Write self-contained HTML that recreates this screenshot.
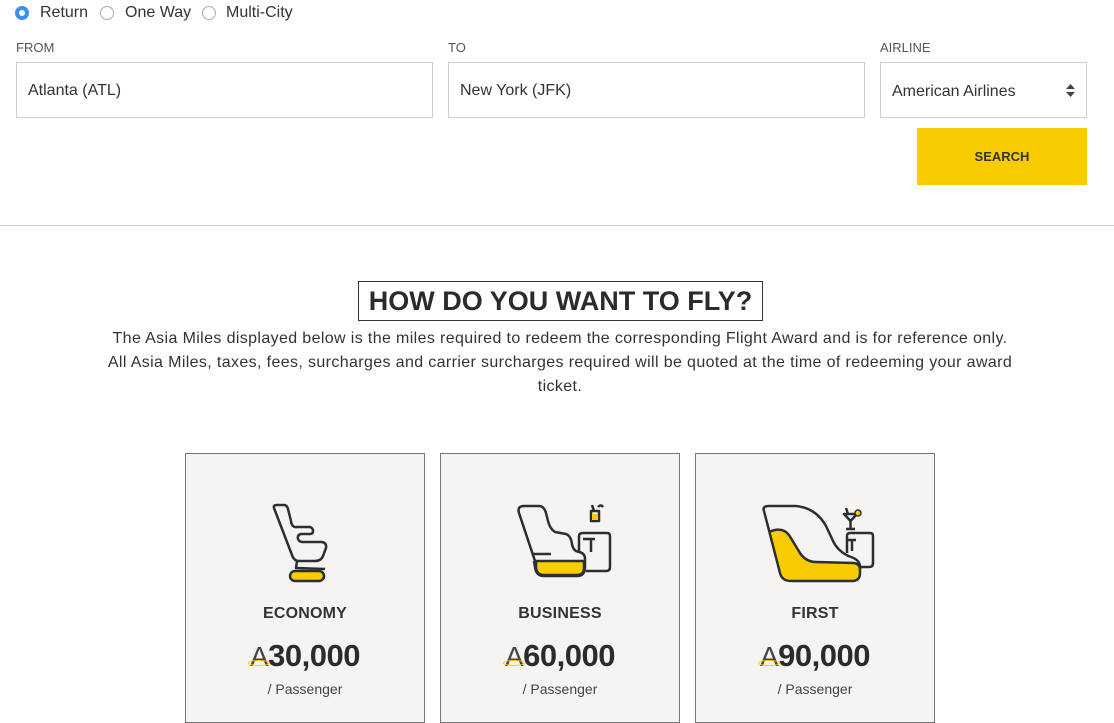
<!DOCTYPE html>
<html><head><meta charset="utf-8"><style>
*{margin:0;padding:0;box-sizing:border-box}
body{width:1114px;height:706px;overflow:hidden;background:#fff;font-family:"Liberation Sans",sans-serif;color:#333;position:relative}
.a{position:absolute}
.radio{width:14px;height:14px;border:1px solid #aaa;border-radius:50%;top:6px}
.lbl{font-size:13px;color:#555;top:40px}
.inp{border:1px solid #ccc;height:56px;top:62px;font-size:16px;padding-left:11px;line-height:56px;color:#333}
.card{top:453px;width:240px;height:270px;background:#f5f4f2;border:1px solid #777}
.t{position:absolute;left:0;right:0;text-align:center}
.ttl{top:151px;font-size:16px;font-weight:bold;color:#333;letter-spacing:.2px}
.pr{top:184px;font-size:31px;font-weight:bold;color:#2b2b2b;letter-spacing:-.5px}
.pr span{font-weight:normal;color:#444;font-size:28px;position:relative}
.pr span:after{content:"";position:absolute;left:-2px;top:19px;width:20px;height:4px;border:1.5px solid #f8cc00;border-radius:50%}
.ps{top:227px;font-size:14px;color:#444}
</style></head><body>
<div class="a radio" style="left:15px;border:4px solid #3b8ff5;background:#fff"></div>
<div class="a" style="left:40px;top:4px;font-size:16px">Return</div>
<div class="a radio" style="left:100px"></div>
<div class="a" style="left:125px;top:4px;font-size:16px">One Way</div>
<div class="a radio" style="left:202px"></div>
<div class="a" style="left:226px;top:4px;font-size:16px">Multi-City</div>
<div class="a lbl" style="left:16px">FROM</div>
<div class="a lbl" style="left:448px">TO</div>
<div class="a lbl" style="left:880px">AIRLINE</div>
<div class="a inp" style="left:16px;width:417px">Atlanta (ATL)</div>
<div class="a inp" style="left:448px;width:417px">New York (JFK)</div>
<div class="a inp" style="left:880px;width:207px;line-height:58px">American Airlines</div>
<svg class="a" style="left:1064px;top:83px" width="14" height="16"><path d="M2 6 L6.5 1 L11 6Z M2 9 L6.5 14 L11 9Z" fill="#444"/></svg>
<div class="a" style="left:917px;top:128px;width:170px;height:57px;background:#f8cc00;font-size:13px;font-weight:bold;text-align:center;line-height:57px;color:#333">SEARCH</div>
<div class="a" style="left:0;top:225px;width:1114px;height:1px;background:#ccc"></div>
<div class="a" style="left:358px;top:281px;width:405px;height:40px;border:1px solid #333;font-size:27px;font-weight:bold;text-align:center;line-height:38px;color:#2b2b2b">HOW DO YOU WANT TO FLY?</div>
<div class="a" style="left:60px;top:327px;width:1000px;text-align:center;font-size:16px;line-height:24px;color:#333;letter-spacing:.37px">The Asia Miles displayed below is the miles required to redeem the corresponding Flight Award and is for reference only.<br>All Asia Miles, taxes, fees, surcharges and carrier surcharges required will be quoted at the time of redeeming your award<br>ticket.</div>

<div class="a card" style="left:185px">
<svg class="a" style="left:80px;top:47px" width="80" height="90" viewBox="0 0 80 90"><g fill="none" stroke="#2b2f33" stroke-width="2.5" stroke-linejoin="round">
<path d="M8 7 Q7 4 11 4 L18 4 Q21 4 22 8 L25 20 Q26 27 31 26 L44 26 Q47 27 47 30 Q47 33 44 33 L35 33 Q31 34 32 38 Q33 41 37 41 L56 41 Q61 42 60 47 L57 55 Q55 60 49 60 L33 60 Q28 60 26 54 Z"/>
<path d="M31 60 L30 67 L59 68"/></g>
<rect x="24" y="70" width="34" height="10" rx="5" fill="#f8cc00" stroke="#2b2f33" stroke-width="2.5"/></svg>
<div class="t ttl">ECONOMY</div>
<div class="t pr"><span>A</span>30,000</div>
<div class="t ps">/ Passenger</div>
</div>

<div class="a card" style="left:440px">
<svg class="a" style="left:72px;top:47px" width="110" height="90" viewBox="0 0 110 90"><g fill="none" stroke="#2b2f33" stroke-width="2.5" stroke-linejoin="round">
<path d="M24 66 L6 12 Q4 5 11 5 L26 5 Q31 5 33 12 L35 20 Q37 28 42 31 L53 33 Q58 35 59 43 Q60 50 66 51 Q72 52 72 58 L72 66 Q72 75 64 75 L31 75 Q23 75 22 66 L21 60"/>
<path d="M20 53 L38 53"/>
<path d="M66 52 L66 35 Q66 32 70 32 L94 32 Q97 32 97 35 L97 66 Q97 70 93 70 L73 70"/>
<path d="M70 38 L82 38 M78 38 L78 51"/>
<path d="M78 10 L78 20 L86 20 L86 10 Z"/><path d="M81 10 L79 4 M85 6 Q88 3 90 6"/></g>
<path d="M23 60 L71 60 L71 67 Q71 74 64 74 L31 74 Q24 74 23 67Z" fill="#f8cc00" stroke="#2b2f33" stroke-width="2.5"/>
<rect x="79" y="13" width="6" height="6" fill="#f8cc00"/></svg>
<div class="t ttl">BUSINESS</div>
<div class="t pr"><span>A</span>60,000</div>
<div class="t ps">/ Passenger</div>
</div>

<div class="a card" style="left:695px">
<svg class="a" style="left:60px;top:47px" width="120" height="90" viewBox="0 0 120 90"><g fill="none" stroke="#2b2f33" stroke-width="2.5" stroke-linejoin="round">
<path d="M91 52 L91 35 Q91 32 94 32 L114 32 Q117 32 117 35 L117 62 Q117 66 113 66 L104 66"/>
<path d="M90 39 L100 39 M96 39 L96 50"/>
<path d="M88 13 L101 13 L94.5 20 Z M94.5 20 L94.5 27 M90 28 L99 28 M92 13 L90 7"/></g>
<circle cx="102" cy="12" r="3" fill="#f8cc00" stroke="#2b2f33" stroke-width="1.5"/>
<path d="M13 31 Q26 25 33 34 L44 52 Q50 61 60 61 L98 62 Q104 63 104 70 L104 72 Q104 80 96 80 L35 80 Q26 80 24 72 Z" fill="#f8cc00"/>
<path d="M8 10 Q6 5 13 5 L40 5 Q60 7 70 25 L78 42 Q84 52 95 56 Q104 59 104 66 L104 72 Q104 80 96 80 L35 80 Q26 80 24 72 Z" fill="none" stroke="#2b2f33" stroke-width="2.5" stroke-linejoin="round"/>
<path d="M13 31 Q26 25 33 34 L44 52 Q50 61 60 61 L98 62 Q104 63 104 68" fill="none" stroke="#2b2f33" stroke-width="2.5"/></svg>
<div class="t ttl">FIRST</div>
<div class="t pr"><span>A</span>90,000</div>
<div class="t ps">/ Passenger</div>
</div>
</body></html>
